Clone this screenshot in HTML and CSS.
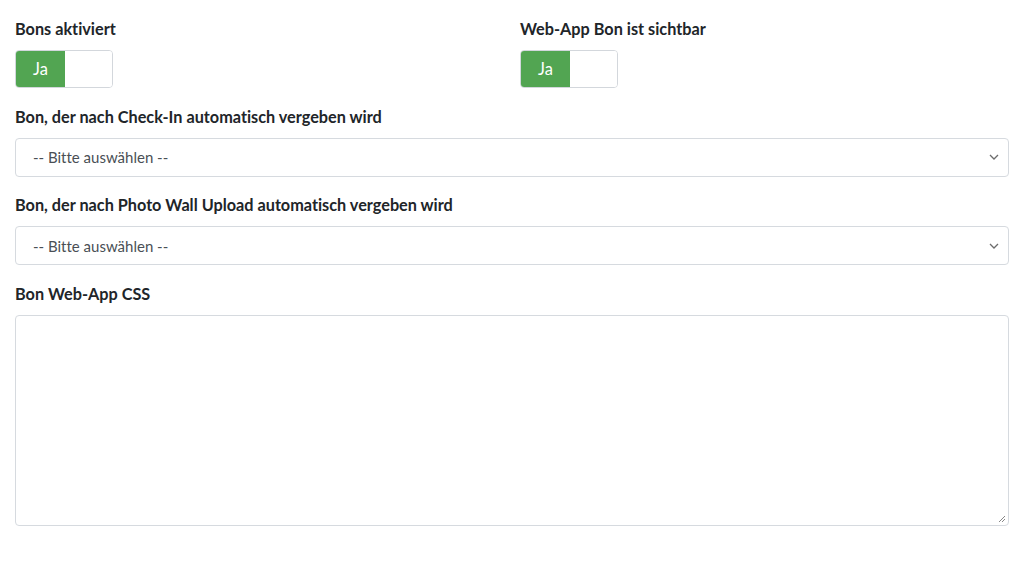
FILE: index.html
```html
<!DOCTYPE html>
<html lang="de">
<head>
<meta charset="utf-8">
<link rel="stylesheet" href="styles.css">
</head>
<body>
<div class="form">
  <div class="row">
    <div class="group">
      <label class="label">Bons aktiviert</label>
      <div class="toggle"><span class="on">Ja</span><span class="off"></span></div>
    </div>
    <div class="group">
      <label class="label">Web-App Bon ist sichtbar</label>
      <div class="toggle"><span class="on">Ja</span><span class="off"></span></div>
    </div>
  </div>
  <div class="group">
    <label class="label">Bon, der nach Check-In automatisch vergeben wird</label>
    <div class="select"><span>-- Bitte auswählen --</span>
      <svg class="chev" width="10" height="6" viewBox="0 0 10 6"><path d="M1 1l4 4 4-4" fill="none" stroke="#6c6c6c" stroke-width="1.3"/></svg>
    </div>
  </div>
  <div class="group">
    <label class="label">Bon, der nach Photo Wall Upload automatisch vergeben wird</label>
    <div class="select"><span>-- Bitte auswählen --</span>
      <svg class="chev" width="10" height="6" viewBox="0 0 10 6"><path d="M1 1l4 4 4-4" fill="none" stroke="#6c6c6c" stroke-width="1.3"/></svg>
    </div>
  </div>
  <div class="group">
    <label class="label">Bon Web-App CSS</label>
    <div class="textarea">
      <svg class="grip" width="8" height="8" viewBox="0 0 8 8"><path d="M7 1L1 7M7 4L4 7" stroke="#888" stroke-width="1"/></svg>
    </div>
  </div>
</div>
</body>
</html>
```
FILE: styles.css
```css
* { box-sizing: border-box; }
html, body { margin: 0; background: #fff; }
body {
  font-family: Lato, "Liberation Sans", sans-serif;
  font-variant-ligatures: none;
  color: #212529;
}
.form {
  padding: 18px 15px 0 15px;
  display: flex;
  flex-direction: column;
  gap: 17.5px;
}
.row {
  display: grid;
  grid-template-columns: 1fr 1fr;
  column-gap: 16px;
}
.group {
  display: flex;
  flex-direction: column;
  gap: 10px;
}
.label {
  font-size: 16.25px;
  font-weight: 700;
  line-height: 22px;
  color: #212529;
}
.toggle {
  display: flex;
  width: 98px;
  height: 38px;
  border: 1px solid #d3d7dc;
  border-radius: 4px;
  overflow: hidden;
}
.toggle .on {
  width: 49px;
  background: #52a552;
  color: #fff;
  font-size: 16.5px;
  display: flex;
  align-items: center;
  justify-content: center;
}
.toggle .off { flex: 1; background: #fff; }
.select {
  height: 39px;
  border: 1px solid #d6dadf;
  border-radius: 4px;
  display: flex;
  align-items: center;
  justify-content: space-between;
  padding: 0 9px 0 17px;
  font-size: 15px;
  color: #4a4f55;
}
.textarea {
  height: 211px;
  border: 1px solid #d6dadf;
  border-radius: 4px;
  display: flex;
  align-items: flex-end;
  justify-content: flex-end;
  padding: 2px;
}
```
